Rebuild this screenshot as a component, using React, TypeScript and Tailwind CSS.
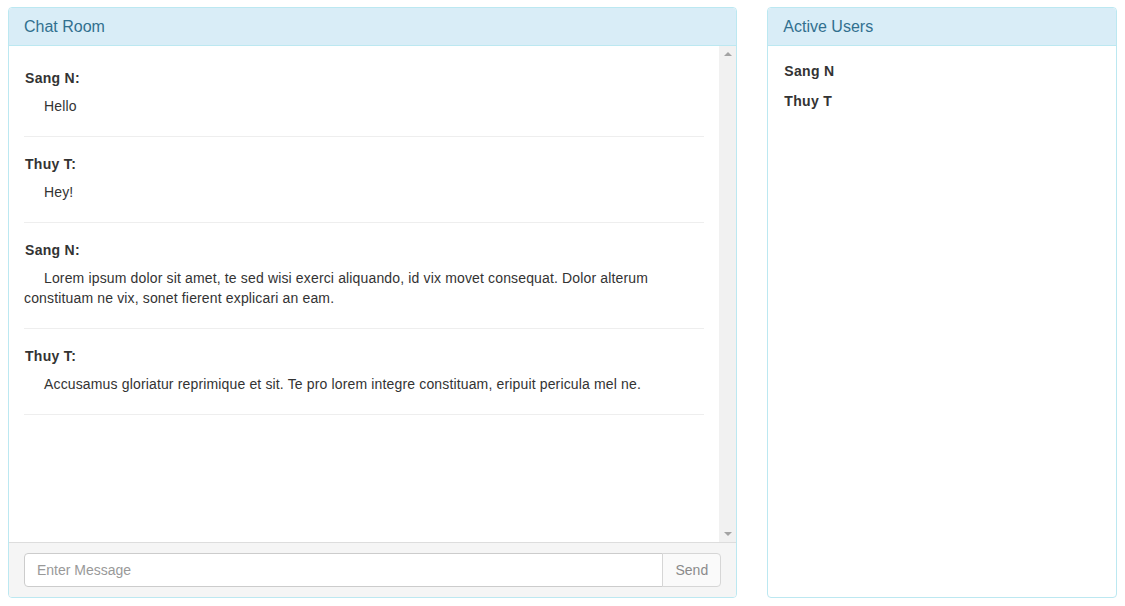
const messages = [
  { name: 'Sang N:', text: 'Hello' },
  { name: 'Thuy T:', text: 'Hey!' },
  {
    name: 'Sang N:',
    text: 'Lorem ipsum dolor sit amet, te sed wisi exerci aliquando, id vix movet consequat. Dolor alterum constituam ne vix, sonet fierent explicari an eam.',
  },
  {
    name: 'Thuy T:',
    text: 'Accusamus gloriatur reprimique et sit. Te pro lorem integre constituam, eripuit pericula mel ne.',
  },
]

const users = ['Sang N', 'Thuy T']

function PanelHeading({ title }: { title: string }) {
  return (
    <div className="h-[38px] px-[15px] flex items-center bg-[#d9edf7] border-b border-[#bce8f1] rounded-t-[3px] text-[16px] text-[#31708f]">
      {title}
    </div>
  )
}

export default function App() {
  return (
    <div
      className="w-[1125px] h-[606px] bg-white flex gap-[30px] px-[8px] pt-[7px] text-[14px] text-[#333]"
      style={{ fontFamily: '"Liberation Sans", Arial, sans-serif' }}
    >
      {/* Chat room */}
      <div className="w-[730px] h-[591px] flex flex-col border border-[#bce8f1] rounded-[4px] overflow-hidden">
        <PanelHeading title="Chat Room" />

        <div className="flex-1 flex min-h-0">
          <div className="flex-1 px-[15px] pt-[24px] flex flex-col gap-[19px] tracking-[0.15px]">
            {messages.map((m, i) => (
              <div key={i} className="pb-[20px] border-b border-[#eee]">
                <div className="h-[16px] leading-[16px] font-bold pl-px tracking-[0.3px]">{m.name}</div>
                <p className="mt-[10px] leading-[20px] indent-[20px]">{m.text}</p>
              </div>
            ))}
          </div>

          {/* Scrollbar */}
          <div className="w-[17px] bg-[#f1f1f1] flex flex-col justify-between items-center py-[6px]">
            <div className="w-0 h-0 border-x-[4px] border-x-transparent border-b-[4px] border-b-[#a3a3a3]" />
            <div className="w-0 h-0 border-x-[4px] border-x-transparent border-t-[4px] border-t-[#a3a3a3]" />
          </div>
        </div>

        <div className="h-[55px] bg-[#f5f5f5] border-t border-[#ddd] px-[15px] py-[10px]">
          <div className="flex h-[34px]">
            <input
              className="flex-1 min-w-0 px-[12px] bg-white border border-[#ccc] rounded-l-[4px] text-[14px] text-[#555] placeholder:text-[#999] outline-none"
              placeholder="Enter Message"
            />
            <button className="w-[59px] -ml-px bg-[#fafafa] border border-[#d6d6d6] rounded-r-[4px] text-[14px] text-[#8a8a8a]">
              Send
            </button>
          </div>
        </div>
      </div>

      {/* Active users */}
      <div className="w-[350px] h-[591px] flex flex-col border border-[#bce8f1] rounded-[4px] overflow-hidden">
        <PanelHeading title="Active Users" />
        <div className="flex-1 p-[15px] pl-[16px] flex flex-col gap-[10px] tracking-[0.3px]">
          {users.map((u) => (
            <div key={u} className="leading-[20px] font-bold">
              {u}
            </div>
          ))}
        </div>
      </div>
    </div>
  )
}
